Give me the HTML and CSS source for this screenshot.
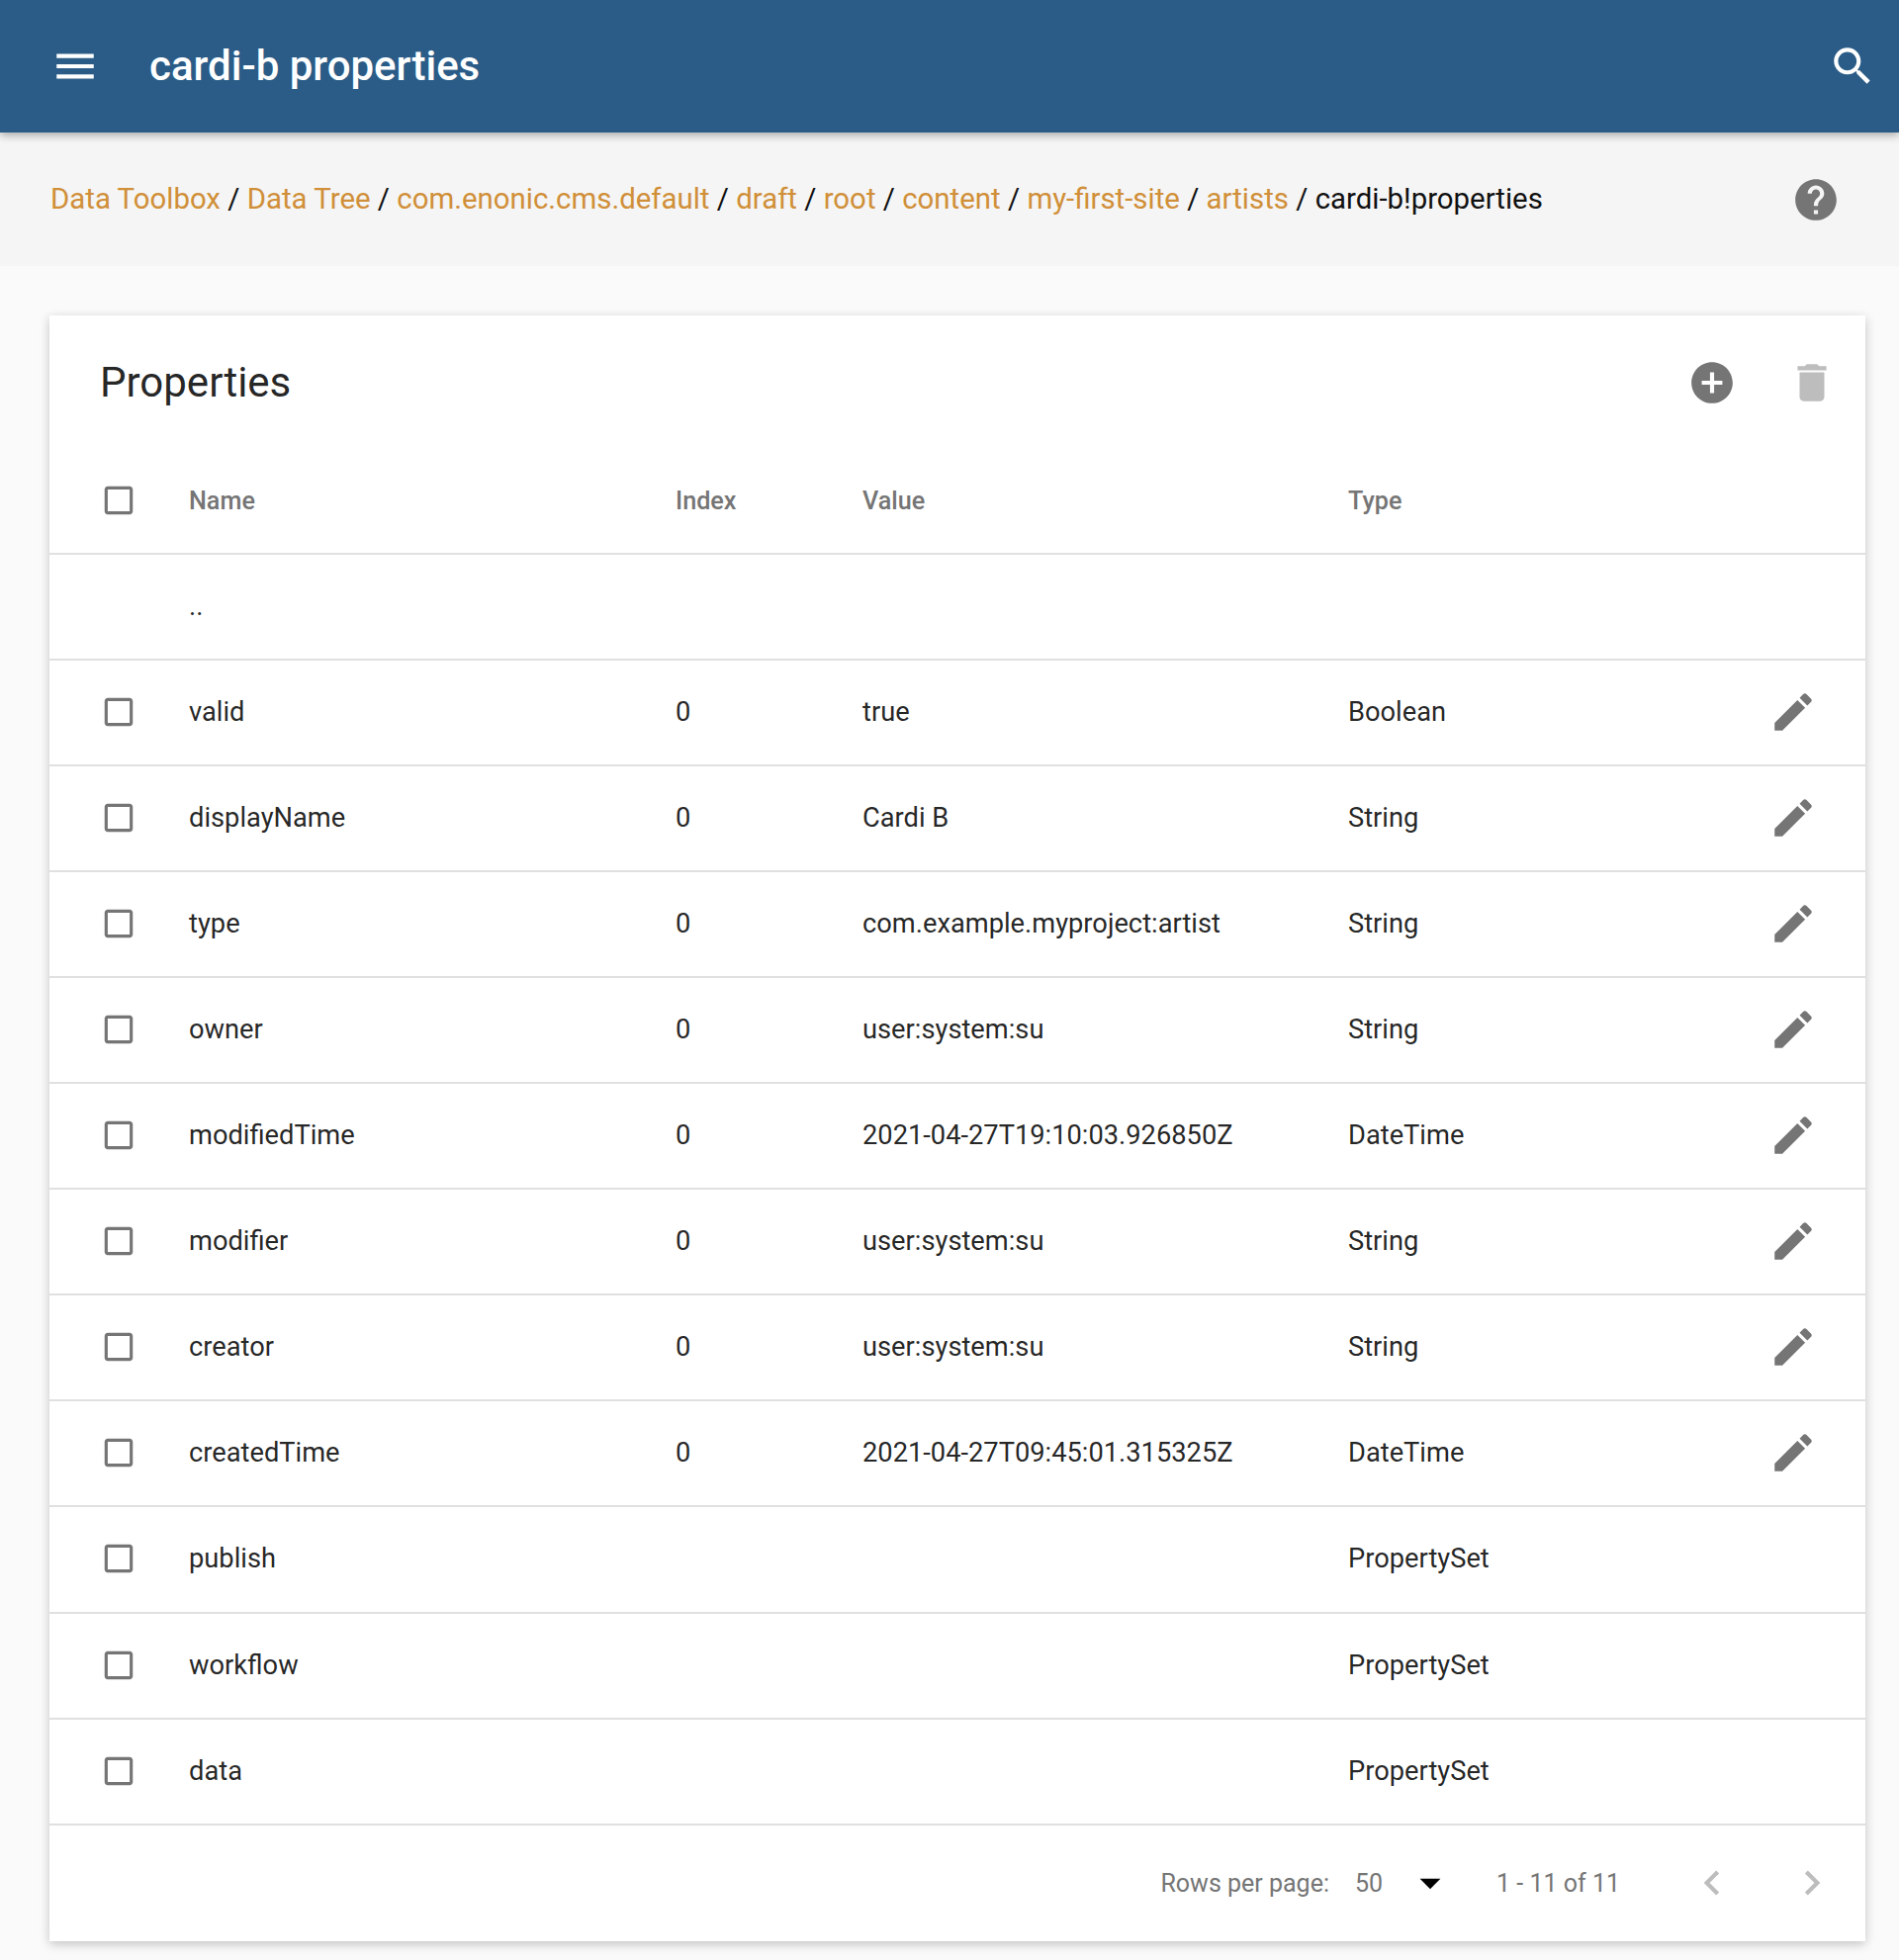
FILE: index.html
```html
<!DOCTYPE html>
<html lang="en">
<head>
    <meta charset="UTF-8">
    <meta name="viewport" content="width=device-width, initial-scale=1.0">
    <title>cardi-b properties</title>
    <link rel="stylesheet" href="styles.css">
</head>
<body>
    <header class="app-bar">
        <svg class="icon menu-icon" viewBox="0 0 24 24"><path d="M3 18h18v-2H3v2zm0-5h18v-2H3v2zm0-7v2h18V6H3z"/></svg>
        <h1 class="app-title">cardi-b properties</h1>
        <svg class="icon search-icon" viewBox="0 0 24 24"><path d="M15.5 14h-.79l-.28-.27C15.41 12.59 16 11.11 16 9.5 16 5.91 13.09 3 9.5 3S3 5.91 3 9.5 5.91 16 9.5 16c1.61 0 3.09-.59 4.23-1.57l.27.28v.79l5 4.99L20.49 19l-4.99-5zm-6 0C7.01 14 5 11.99 5 9.5S7.01 5 9.5 5 14 7.01 14 9.5 11.99 14 9.5 14z"/></svg>
    </header>

    <nav class="crumbs">
        <div class="crumb-path">
            <a href="#">Data Toolbox</a> / <a href="#">Data Tree</a> / <a href="#">com.enonic.cms.default</a> / <a href="#">draft</a> / <a href="#">root</a> / <a href="#">content</a> / <a href="#">my-first-site</a> / <a href="#">artists</a> / cardi-b!properties
        </div>
        <svg class="icon help-icon" viewBox="0 0 24 24"><path d="M12 2C6.48 2 2 6.48 2 12s4.48 10 10 10 10-4.48 10-10S17.52 2 12 2zm1 17h-2v-2h2v2zm2.07-7.75l-.9.92C13.45 12.9 13 13.5 13 15h-2v-.5c0-1.1.45-2.1 1.17-2.83l1.24-1.26c.37-.36.59-.86.59-1.41 0-1.1-.9-2-2-2s-2 .9-2 2H8c0-2.21 1.79-4 4-4s4 1.79 4 4c0 .88-.36 1.68-.93 2.25z"/></svg>
    </nav>

    <main class="content">
        <section class="card">
            <div class="card-head">
                <h2 class="card-title">Properties</h2>
                <div class="card-actions">
                    <svg class="icon" viewBox="0 0 24 24"><path d="M12 2C6.48 2 2 6.48 2 12s4.48 10 10 10 10-4.48 10-10S17.52 2 12 2zm5 11h-4v4h-2v-4H7v-2h4V7h2v4h4v2z"/></svg>
                    <svg class="icon disabled" viewBox="0 0 24 24"><path d="M6 19c0 1.1.9 2 2 2h8c1.1 0 2-.9 2-2V7H6v12zM19 4h-3.5l-1-1h-5l-1 1H5v2h14V4z"/></svg>
                </div>
            </div>

            <table class="props">
                <colgroup>
                    <col class="col-check">
                    <col class="col-name">
                    <col class="col-index">
                    <col class="col-value">
                    <col class="col-type">
                    <col class="col-edit">
                </colgroup>
                <thead>
                    <tr>
                        <th><svg class="icon check" viewBox="0 0 24 24"><path d="M19 5v14H5V5h14m0-2H5c-1.1 0-2 .9-2 2v14c0 1.1.9 2 2 2h14c1.1 0 2-.9 2-2V5c0-1.1-.9-2-2-2z"/></svg></th>
                        <th>Name</th>
                        <th>Index</th>
                        <th>Value</th>
                        <th>Type</th>
                        <th></th>
                    </tr>
                </thead>
                <tbody id="rows">
                    <tr><td></td><td>..</td><td></td><td></td><td></td><td></td></tr>
                </tbody>
            </table>

            <div class="pager">
                <span class="pager-label">Rows per page:</span>
                <span class="pager-size">50</span>
                <svg class="icon pager-arrow" viewBox="0 0 24 24"><path d="M7 10l5 5 5-5z"/></svg>
                <span class="pager-range">1 - 11 of 11</span>
                <svg class="icon disabled pager-prev" viewBox="0 0 24 24"><path d="M15.41 16.59L10.83 12l4.58-4.59L14 6l-6 6 6 6 1.41-1.41z"/></svg>
                <svg class="icon disabled pager-next" viewBox="0 0 24 24"><path d="M8.59 16.59L13.17 12 8.59 7.41 10 6l6 6-6 6-1.41-1.41z"/></svg>
            </div>
        </section>
    </main>

    <script>
        const props = [
            ['valid', '0', 'true', 'Boolean'],
            ['displayName', '0', 'Cardi B', 'String'],
            ['type', '0', 'com.example.myproject:artist', 'String'],
            ['owner', '0', 'user:system:su', 'String'],
            ['modifiedTime', '0', '2021-04-27T19:10:03.926850Z', 'DateTime'],
            ['modifier', '0', 'user:system:su', 'String'],
            ['creator', '0', 'user:system:su', 'String'],
            ['createdTime', '0', '2021-04-27T09:45:01.315325Z', 'DateTime'],
            ['publish', '', '', 'PropertySet'],
            ['workflow', '', '', 'PropertySet'],
            ['data', '', '', 'PropertySet']
        ];

        const checkIcon = document.querySelector('.check').outerHTML;
        const editIcon = '<svg class="icon edit" viewBox="0 0 24 24"><path d="M3 17.25V21h3.75L17.81 9.94l-3.75-3.75L3 17.25zM20.71 7.04c.39-.39.39-1.02 0-1.41l-2.34-2.34c-.39-.39-1.02-.39-1.41 0l-1.83 1.83 3.75 3.75 1.83-1.83z"/></svg>';

        document.getElementById('rows').innerHTML += props.map(([name, index, value, type]) => `
            <tr>
                <td>${checkIcon}</td>
                <td>${name}</td>
                <td>${index}</td>
                <td>${value}</td>
                <td>${type}</td>
                <td class="cell-edit">${index ? editIcon : ''}</td>
            </tr>`).join('');
    </script>
</body>
</html>
```

FILE: styles.css
```css
* {
    box-sizing: border-box;
}
body {
    margin: 0;
    background: #fafafa;
    font-family: Roboto, sans-serif;
    color: rgba(0, 0, 0, 0.87);
}
.icon {
    display: block;
    width: 50px;
    height: 50px;
    flex: none;
    fill: #757575;
}
.icon.disabled {
    fill: #bdbdbd;
}
.app-bar {
    position: relative;
    display: flex;
    align-items: center;
    height: 134px;
    padding: 0 22px 0 51px;
    background: #2a5c87;
    color: white;
    box-shadow: 0 3px 8px rgba(0, 0, 0, 0.3);
}
.app-bar .icon {
    fill: white;
}
.app-title {
    flex: 1;
    margin: 0 0 2px 50px;
    font-size: 42px;
    font-weight: 500;
}
.crumbs {
    display: flex;
    align-items: center;
    justify-content: space-between;
    height: 134.5px;
    padding: 0 59px 0 51px;
    background: #f5f5f5;
    font-size: 29.4px;
    color: #111;
}
.crumb-path {
    margin-bottom: 1px;
}
.crumb-path a {
    color: #d08f38;
    text-decoration: none;
}
.help-icon {
    margin-top: 1px;
}
.content {
    padding: 50.5px 34px 19px 50px;
}
.card {
    background: white;
    box-shadow: 0 3px 10px rgba(0, 0, 0, 0.22);
}
.card-head {
    display: flex;
    align-items: center;
    justify-content: space-between;
    height: 134px;
    padding: 0 29px 0 51px;
}
.card-title {
    margin: 0;
    font-size: 42px;
    font-weight: 400;
}
.card-actions {
    display: flex;
    gap: 51px;
    margin-top: 2px;
}
.props {
    width: 100%;
    border-collapse: collapse;
    table-layout: fixed;
    font-size: 27.27px;
}
.col-check { width: 141px; }
.col-name { width: 492px; }
.col-index { width: 189px; }
.col-value { width: 491px; }
.col-type { width: 400px; }
.props tr {
    height: 107.06px;
    border-bottom: 2px solid #e0e0e0;
}
.props th,
.props td {
    padding: 0;
    text-align: left;
}
.props td {
    padding-bottom: 1px;
}
.props th {
    font-size: 25.2px;
    font-weight: 500;
    color: #757575;
}
.icon.check {
    width: 38px;
    height: 38px;
    margin-left: 51px;
}
.cell-edit .icon {
    margin-left: auto;
    margin-right: 48px;
}
.pager {
    display: flex;
    align-items: center;
    height: 117.3px;
    padding: 0 29px 0 0;
    justify-content: flex-end;
    font-size: 25px;
    color: #757575;
}
.pager-size {
    margin-left: 26px;
}
.pager-arrow {
    margin-left: 23px;
    fill: black;
}
.pager-range {
    margin-left: 42px;
}
.pager-prev {
    margin-left: 68px;
}
.pager-next {
    margin-left: 51px;
}
```
